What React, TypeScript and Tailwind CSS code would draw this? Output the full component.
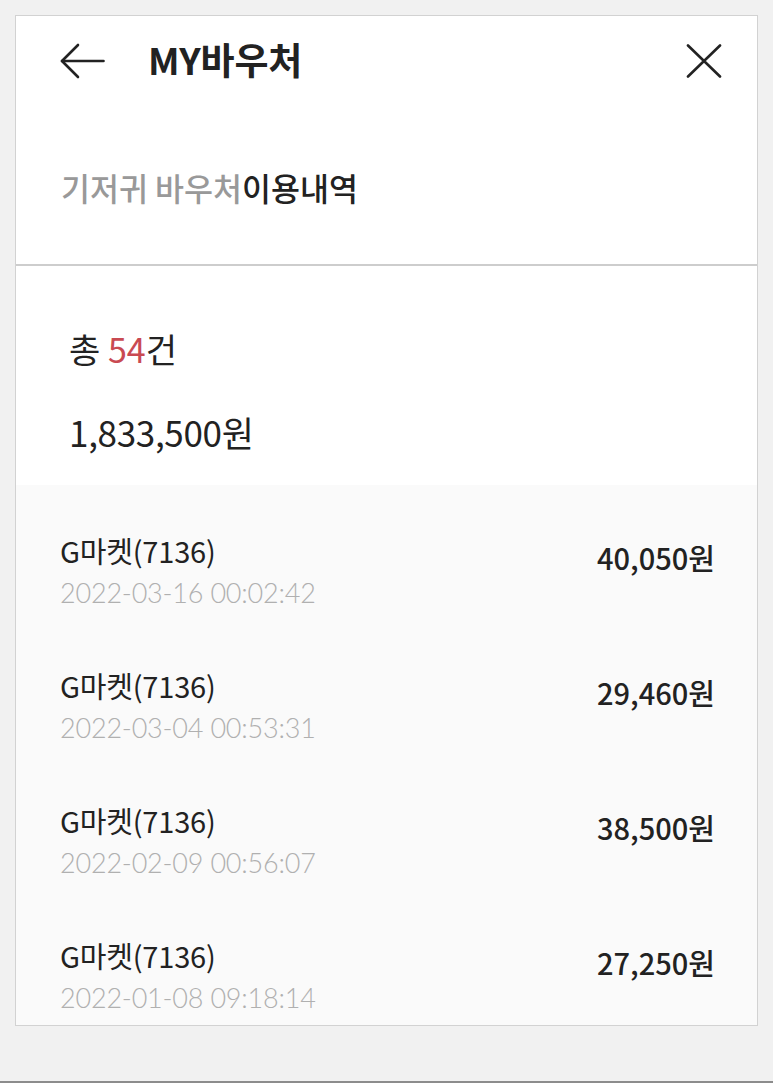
import React from "react";

const KR = '"Noto Sans CJK KR", "Noto Sans", sans-serif';
const LATO = 'Lato, "Noto Sans CJK KR", sans-serif';

const items = [
  { name: "G마켓(7136)", date: "2022-03-16 00:02:42", amount: "40,050원" },
  { name: "G마켓(7136)", date: "2022-03-04 00:53:31", amount: "29,460원" },
  { name: "G마켓(7136)", date: "2022-02-09 00:56:07", amount: "38,500원" },
  { name: "G마켓(7136)", date: "2022-01-08 09:18:14", amount: "27,250원" },
];

function BackIcon() {
  return (
    <svg width="46" height="36" viewBox="0 0 46 36" fill="none">
      <path d="M44.5 18H3" stroke="#222" strokeWidth="2.6" strokeLinecap="round" />
      <path d="M19 2L3 18L19 34" stroke="#222" strokeWidth="2.6" strokeLinecap="round" strokeLinejoin="round" />
    </svg>
  );
}

function CloseIcon() {
  return (
    <svg width="36" height="34" viewBox="0 0 36 34" fill="none">
      <path d="M2 1.5L34 32.5M34 1.5L2 32.5" stroke="#222" strokeWidth="2.6" strokeLinecap="round" />
    </svg>
  );
}

export default function App() {
  return (
    <div className="w-[773px] h-[1083px] bg-[#f1f1f1] flex flex-col" style={{ fontFamily: KR }}>
      <div className="flex-1 pt-[15px] px-[15px]">
        <div className="w-[743px] h-[1011px] bg-white border border-[#d2d2d2] flex flex-col">
          {/* header */}
          <div className="h-[90px] flex items-center pl-[43px] pr-[35px]">
            <BackIcon />
            <div className="ml-[43px] -mt-[3px] text-[37px] leading-[40px] font-bold text-[#222] tracking-[-0.2px]">MY바우처</div>
            <div className="flex-1" />
            <CloseIcon />
          </div>
          {/* subtitle */}
          <div className="pt-[62px] pb-[57px] pl-[45px]">
            <div className="text-[31.5px] leading-[40px] font-medium">
              <span className="text-[#999]">기저귀 바우처</span>
              <span className="text-[#222]">이용내역</span>
            </div>
          </div>
          <div className="h-[2px] bg-[#cdcdcd]" />
          {/* summary */}
          <div className="pt-[63px] pb-[33px] pl-[53px] flex flex-col gap-[43px]">
            <div className="text-[34px] leading-[40px] text-[#222]">
              총 <span className="text-[#c94a52]">54</span>건
            </div>
            <div className="text-[35px] leading-[40px] text-[#222] tracking-[-0.3px]">1,833,500원</div>
          </div>
          {/* list */}
          <div className="flex-1 bg-[#fafafa] flex flex-col">
            {items.map((it, i) => (
              <div key={i} className="h-[135px] flex items-start pl-[44px] pr-[42px] pt-[47px]">
                <div className="flex flex-col gap-[8px]">
                  <div className="text-[29px] leading-[36px] text-[#222] tracking-[-0.2px]">{it.name}</div>
                  <div className="text-[27px] leading-[34px] text-[#b0b0b0] font-light tracking-[-0.2px]" style={{ fontFamily: LATO }}>
                    {it.date}
                  </div>
                </div>
                <div className="flex-1" />
                <div className="mt-[7px] text-[29px] leading-[36px] font-medium text-[#222]">{it.amount}</div>
              </div>
            ))}
          </div>
        </div>
      </div>
      <div className="h-[2px] bg-[#8c8c8c]" />
    </div>
  );
}
